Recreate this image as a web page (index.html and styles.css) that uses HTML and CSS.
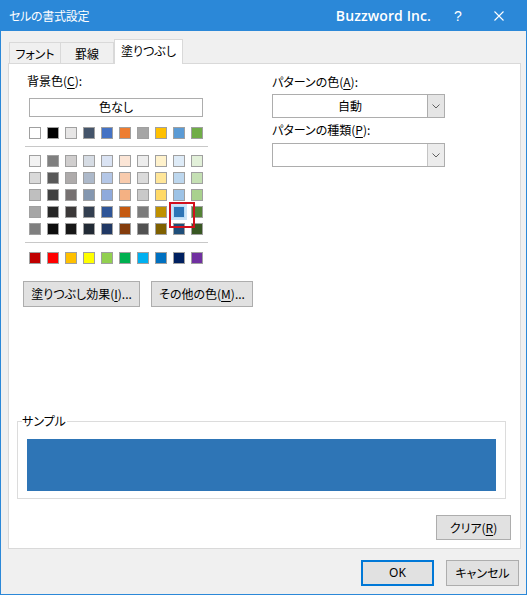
FILE: index.html
```html
<!DOCTYPE html>
<html lang="ja">
<head>
<meta charset="utf-8">
<title>セルの書式設定</title>
<link rel="stylesheet" href="styles.css">
</head>
<body>
<div class="window">
  <div class="titlebar">
    <span class="title">セルの書式設定</span>
    <span class="company">Buzzword Inc.</span>
    <span class="help">?</span>
    <span class="close"><svg width="10" height="10" viewBox="0 0 10 10"><path d="M0.5 0.5 L9.5 9.5 M9.5 0.5 L0.5 9.5" stroke="#fff" stroke-width="1.1" fill="none"/></svg></span>
  </div>
  <div class="content">
    <div class="tabs">
      <div class="tab tab-font">フォント</div>
      <div class="tab tab-border">罫線</div>
      <div class="tab tab-active">塗りつぶし</div>
    </div>
    <div class="panel">
      <div class="top">
        <div class="left">
          <div class="label">背景色(<u>C</u>):</div>
          <div class="none-btn">色なし</div>
          <div class="swatch-row row-theme">
            <span class="sw" style="background:#ffffff"></span>
            <span class="sw" style="background:#000000"></span>
            <span class="sw" style="background:#e7e6e6"></span>
            <span class="sw" style="background:#44546a"></span>
            <span class="sw" style="background:#4472c4"></span>
            <span class="sw" style="background:#ed7d31"></span>
            <span class="sw" style="background:#a5a5a5"></span>
            <span class="sw" style="background:#ffc000"></span>
            <span class="sw" style="background:#5b9bd5"></span>
            <span class="sw" style="background:#70ad47"></span>
          </div>
          <div class="sep sep-1"></div>
          <div class="grid">
            <div class="swatch-row">
              <span class="sw" style="background:#f2f2f2"></span>
              <span class="sw" style="background:#7f7f7f"></span>
              <span class="sw" style="background:#d0cece"></span>
              <span class="sw" style="background:#d6dce4"></span>
              <span class="sw" style="background:#dae3f3"></span>
              <span class="sw" style="background:#fbe5d6"></span>
              <span class="sw" style="background:#ededed"></span>
              <span class="sw" style="background:#fff2cc"></span>
              <span class="sw" style="background:#deebf7"></span>
              <span class="sw" style="background:#e2f0d9"></span>
            </div>
            <div class="swatch-row">
              <span class="sw" style="background:#d9d9d9"></span>
              <span class="sw" style="background:#595959"></span>
              <span class="sw" style="background:#aeabab"></span>
              <span class="sw" style="background:#adb9ca"></span>
              <span class="sw" style="background:#b4c7e7"></span>
              <span class="sw" style="background:#f8cbad"></span>
              <span class="sw" style="background:#dbdbdb"></span>
              <span class="sw" style="background:#ffe699"></span>
              <span class="sw" style="background:#bdd7ee"></span>
              <span class="sw" style="background:#c5e0b4"></span>
            </div>
            <div class="swatch-row">
              <span class="sw" style="background:#bfbfbf"></span>
              <span class="sw" style="background:#404040"></span>
              <span class="sw" style="background:#767171"></span>
              <span class="sw" style="background:#8497b0"></span>
              <span class="sw" style="background:#8faadc"></span>
              <span class="sw" style="background:#f4b183"></span>
              <span class="sw" style="background:#c9c9c9"></span>
              <span class="sw" style="background:#ffd966"></span>
              <span class="sw" style="background:#9dc3e6"></span>
              <span class="sw" style="background:#a9d18e"></span>
            </div>
            <div class="swatch-row">
              <span class="sw" style="background:#a6a6a6"></span>
              <span class="sw" style="background:#262626"></span>
              <span class="sw" style="background:#3b3838"></span>
              <span class="sw" style="background:#333f50"></span>
              <span class="sw" style="background:#2f5597"></span>
              <span class="sw" style="background:#c55a11"></span>
              <span class="sw" style="background:#7b7b7b"></span>
              <span class="sw" style="background:#bf9000"></span>
              <span class="sw selected" style="background:#2e75b6"></span>
              <span class="sw" style="background:#548235"></span>
            </div>
            <div class="swatch-row">
              <span class="sw" style="background:#7f7f7f"></span>
              <span class="sw" style="background:#0d0d0d"></span>
              <span class="sw" style="background:#171717"></span>
              <span class="sw" style="background:#222a35"></span>
              <span class="sw" style="background:#203864"></span>
              <span class="sw" style="background:#843c0c"></span>
              <span class="sw" style="background:#525252"></span>
              <span class="sw" style="background:#7f6000"></span>
              <span class="sw" style="background:#1f4e79"></span>
              <span class="sw" style="background:#385723"></span>
            </div>
          </div>
          <div class="sep sep-2"></div>
          <div class="swatch-row row-standard">
            <span class="sw" style="background:#c00000"></span>
            <span class="sw" style="background:#ff0000"></span>
            <span class="sw" style="background:#ffc000"></span>
            <span class="sw" style="background:#ffff00"></span>
            <span class="sw" style="background:#92d050"></span>
            <span class="sw" style="background:#00b050"></span>
            <span class="sw" style="background:#00b0f0"></span>
            <span class="sw" style="background:#0070c0"></span>
            <span class="sw" style="background:#002060"></span>
            <span class="sw" style="background:#7030a0"></span>
          </div>
          <div class="btn-row">
            <div class="btn btn-effect">塗りつぶし効果(<u>I</u>)...</div>
            <div class="btn btn-more">その他の色(<u>M</u>)...</div>
          </div>
        </div>
        <div class="right">
          <div class="label">パターンの色(<u>A</u>):</div>
          <div class="combo combo-color">
            <span class="combo-text">自動</span>
            <span class="combo-arrow"><svg width="8" height="5" viewBox="0 0 8 5"><path d="M0.5 0.5 L4 4 L7.5 0.5" stroke="#606060" stroke-width="1" fill="none"/></svg></span>
          </div>
          <div class="label label-2">パターンの種類(<u>P</u>):</div>
          <div class="combo combo-pattern">
            <span class="combo-text"></span>
            <span class="combo-arrow"><svg width="8" height="5" viewBox="0 0 8 5"><path d="M0.5 0.5 L4 4 L7.5 0.5" stroke="#606060" stroke-width="1" fill="none"/></svg></span>
          </div>
        </div>
      </div>
      <div class="sample">
        <span class="sample-label">サンプル</span>
        <div class="sample-fill"></div>
      </div>
      <div class="clear-row">
        <div class="btn btn-clear">クリア(<u>R</u>)</div>
      </div>
    </div>
    <div class="footer">
      <div class="btn btn-ok">OK</div>
      <div class="btn btn-cancel">キャンセル</div>
    </div>
  </div>
</div>
</body>
</html>
```

FILE: styles.css
```css
* { box-sizing: border-box; }
html, body { margin: 0; padding: 0; }
body {
  font-family: "Noto Sans CJK JP", "Noto Sans", sans-serif;
  font-size: 12px;
  font-feature-settings: "palt";
  color: #000;
  background: #f0f0f0;
}
u { text-decoration: underline; text-underline-offset: 2px; text-decoration-thickness: 1px; }

.window {
  width: 527px;
  height: 595px;
  background: #f0f0f0;
  border: 1px solid #2b88d8;
  border-top: none;
}
.titlebar {
  height: 31px;
  margin: 0 -1px;
  background: #2b88d8;
  color: #fff;
  display: flex;
  align-items: center;
}
.title { padding-left: 9px; letter-spacing: -0.3px; font-size: 12px; }
.company {
  margin-left: auto;
  font-family: "Open Sans", "Liberation Sans", sans-serif;
  font-weight: 600;
  font-size: 14px;
  letter-spacing: 0.1px;
}
.help {
  width: 36px;
  margin-left: 9px;
  text-align: center;
  font-family: "Liberation Sans", sans-serif;
  font-size: 14px;
}
.close {
  width: 46px;
  margin-right: 5px;
  display: flex;
  justify-content: center;
}

.content { padding: 8px 5px 0 7px; }

.tabs {
  display: flex;
  align-items: flex-end;
  height: 24px;
  padding-left: 1px;
  position: relative;
  z-index: 1;
}
.tab {
  height: 21px;
  border: 1px solid #d9d9d9;
  border-bottom: none;
  background: #f0f0f0;
  display: flex;
  align-items: center;
  justify-content: center;
  line-height: 16px;
  padding-top: 1px;
}
.tab-font { width: 52px; }
.tab-border { width: 53px; border-left: none; }
.tab-active {
  width: 69px;
  height: 25px;
  margin-bottom: -1px;
  background: #fff;
  padding-top: 0;
  padding-bottom: 2px;
}

.panel {
  width: 513px;
  height: 486px;
  background: #fff;
  border: 1px solid #d9d9d9;
  display: flex;
  flex-direction: column;
}
.top { display: flex; }
.left {
  width: 249px;
  margin-left: 14px;
  padding-top: 9px;
}
.label { line-height: 16px; padding-left: 4px; }
.none-btn {
  margin: 9px 0 0 6px;
  width: 174px;
  height: 19px;
  border: 1px solid #adadad;
  text-align: center;
  line-height: 16px;
}
.swatch-row { display: flex; gap: 6px; margin-left: 6px; }
.row-theme { margin-top: 10px; }
.sw {
  width: 12px;
  height: 12px;
  border: 1px solid #a0a0a0;
  display: block;
  position: relative;
}
.sw.selected { border-color: #b9dbf5; box-shadow: 0 0 0 2px #cce4f7; z-index: 2; }
.sw.selected::after {
  content: "";
  position: absolute;
  left: -5px;
  top: -5px;
  width: 22px;
  height: 22px;
  border: 2px solid #d3101c;
}
.sep { height: 1px; background: #c8c8c8; width: 183px; margin-left: 2px; }
.sep-1 { margin-top: 7px; }
.grid { margin-top: 8px; display: flex; flex-direction: column; gap: 5px; }
.sep-2 { margin-top: 7px; }
.row-standard { margin-top: 9px; }
.btn-row { display: flex; gap: 11px; margin-top: 17px; }
.btn {
  height: 26px;
  background: #e1e1e1;
  border: 1px solid #adadad;
  display: flex;
  align-items: center;
  justify-content: center;
  line-height: 16px;
}
.btn-effect { width: 117px; }
.btn-more { width: 102px; }

.right { width: 173px; padding-top: 10px; }
.right .label { padding-left: 0; }
.label-2 { margin-top: 4px; }
.combo {
  margin-top: 4px;
  height: 24px;
  border: 1px solid #adadad;
  background: #fff;
  display: flex;
}
.combo-pattern { margin-top: 5px; }
.combo-text { flex: 1; text-align: center; line-height: 22px; }
.combo-arrow {
  width: 17px;
  background: #e5e5e5;
  border-left: 1px solid #adadad;
  display: flex;
  align-items: center;
  justify-content: center;
}
.combo-pattern .combo-arrow { background: #ececec; border-left-color: #c4c4c4; }

.sample {
  margin: auto 0 0 8px;
  width: 489px;
  height: 78px;
  border: 1px solid #dcdcdc;
  padding: 17px 9px 0 9px;
  position: relative;
}
.sample-label {
  position: absolute;
  top: -9px;
  left: 4px;
  background: #fff;
  line-height: 16px;
  padding: 0 1px 0 0;
}
.sample-fill { height: 52px; background: #2e75b6; }
.clear-row { display: flex; justify-content: flex-end; padding: 16px 9px 8px 0; }
.btn-clear { width: 75px; height: 25px; }

.footer { display: flex; justify-content: flex-end; gap: 12px; padding: 11px 2px 0 0; }
.btn-ok { width: 73px; border: 2px solid #0078d7; font-family: "Noto Sans", sans-serif; }
.btn-cancel { width: 73px; }
```
